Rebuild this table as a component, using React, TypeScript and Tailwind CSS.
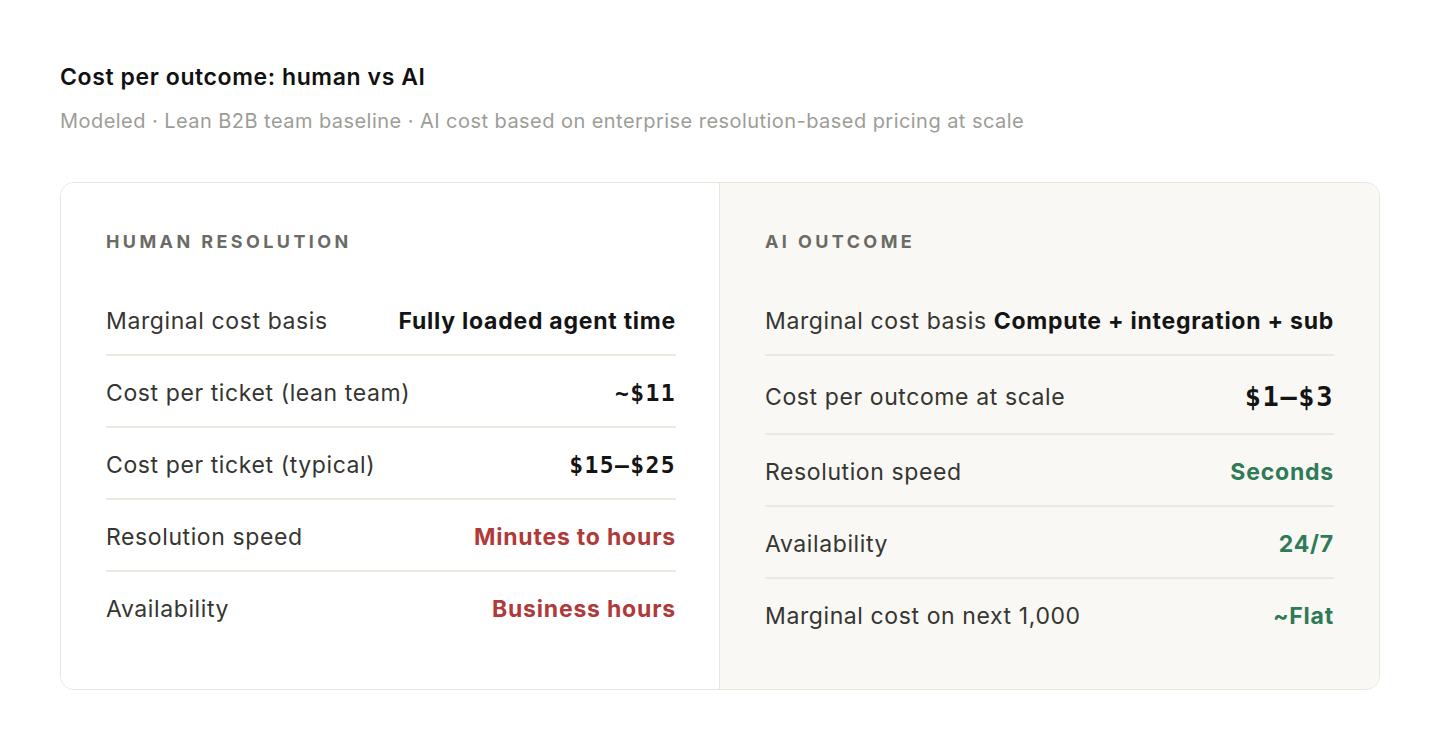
const human = [
  { label: 'Marginal cost basis', value: 'Fully loaded agent time', kind: 'text' },
  { label: 'Cost per ticket (lean team)', value: '~$11', kind: 'num' },
  { label: 'Cost per ticket (typical)', value: '$15–$25', kind: 'num' },
  { label: 'Resolution speed', value: 'Minutes to hours', kind: 'bad' },
  { label: 'Availability', value: 'Business hours', kind: 'bad' },
];

const ai = [
  { label: 'Marginal cost basis', value: 'Compute + integration + sub', kind: 'text' },
  { label: 'Cost per outcome at scale', value: '$1–$3', kind: 'big' },
  { label: 'Resolution speed', value: 'Seconds', kind: 'good' },
  { label: 'Availability', value: '24/7', kind: 'good' },
  { label: 'Marginal cost on next 1,000', value: '~Flat', kind: 'good' },
];

type Row = { label: string; value: string; kind: string };

function Value({ row }: { row: Row }) {
  if (row.kind === 'num') {
    return (
      <span className="font-['DejaVu_Sans_Mono',monospace] text-[23px] leading-[30px] font-bold tracking-[1.4px] text-[#141414]">
        {row.value}
      </span>
    );
  }
  if (row.kind === 'big') {
    return (
      <span className="font-['DejaVu_Sans_Mono',monospace] text-[27px] font-bold leading-[37px] tracking-[1.6px] text-[#141414]">
        {row.value}
      </span>
    );
  }
  if (row.kind === 'bad') {
    return <span className="text-[23px] leading-[30px] font-bold tracking-[0.8px] text-[#b03a3a]">{row.value}</span>;
  }
  if (row.kind === 'good') {
    return <span className="text-[23px] leading-[30px] font-bold tracking-[0.8px] text-[#2f7a57]">{row.value}</span>;
  }
  return (
    <span className="text-[23px] leading-[30px] font-bold tracking-[0.75px] text-[#141414] whitespace-nowrap">
      {row.value}
    </span>
  );
}

function Panel({ title, rows, tint }: { title: string; rows: Row[]; tint?: boolean }) {
  return (
    <div
      className={`pl-[45px] pt-[49px] pb-[40px] ${
        tint ? 'pr-[45px] bg-[#f9f8f4]' : 'pr-[43px] bg-white border-r border-[#e8e5da]'
      }`}
    >
      <h3 className="text-[18px] font-bold tracking-[3.4px] text-[#6b6b66] leading-[20px] mb-[32px]">{title}</h3>
      <div>
        {rows.map((row, i) => (
          <div
            key={row.label}
            className={`flex items-center justify-between gap-1 pt-[22px] pb-[18px] ${
              i < rows.length - 1 ? 'border-b-2 border-[#ece9e0]' : ''
            }`}
          >
            <span className="text-[23px] leading-[30px] tracking-[0.6px] text-[#353532] whitespace-nowrap">{row.label}</span>
            <Value row={row} />
          </div>
        ))}
      </div>
    </div>
  );
}

export default function App() {
  return (
    <div className="min-h-screen bg-white px-[60px] pt-[62px] font-['Inter',sans-serif]">
      <h1 className="text-[23px] font-semibold leading-[30px] text-[#111] tracking-[0.6px]">Cost per outcome: human vs AI</h1>
      <p className="mt-[16px] text-[20px] leading-[26px] tracking-[0.45px] text-[#9d9d97]">
        Modeled · Lean B2B team baseline · AI cost based on enterprise resolution-based pricing at scale
      </p>
      <div className="mt-[48px] grid grid-cols-2 border border-[#e8e5da] rounded-[14px] overflow-hidden">
        <Panel title="HUMAN RESOLUTION" rows={human} />
        <Panel title="AI OUTCOME" rows={ai} tint />
      </div>
    </div>
  );
}
